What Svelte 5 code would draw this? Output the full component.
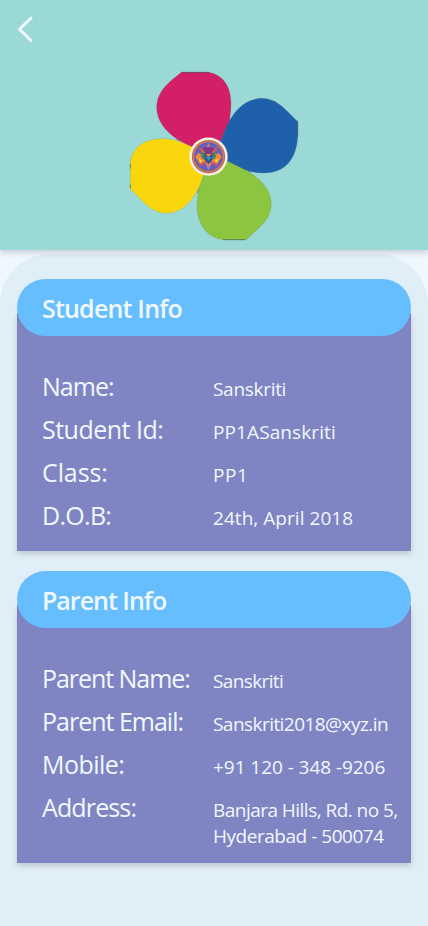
<script>
  // Each text carries its own tracking in px: [label, tracking, value lines]
  const cards = [
    {
      title: 'Student Info',
      tracking: -0.8,
      kind: 'student',
      rows: [
        ['Name:', -0.95, [['Sanskriti', -0.3]]],
        ['Student Id:', -0.5, [['PP1ASanskriti', 0.1]]],
        ['Class:', -0.1, [['PP1', 0.6]]],
        ['D.O.B:', -0.7, [['24th, April 2018', 0.05]]]
      ]
    },
    {
      title: 'Parent Info',
      tracking: -1,
      kind: 'parent',
      rows: [
        ['Parent Name:', -1.05, [['Sanskriti', -0.63]]],
        ['Parent Email:', -1, [['Sanskriti2018@xyz.in', -0.55]]],
        ['Mobile:', -0.55, [['+91 120 - 348 -9206', -0.05]]],
        ['Address:', -0.87, [['Banjara Hills, Rd. no 5,', -0.53], ['Hyderabad - 500074', -0.47]]]
      ]
    }
  ];
  const spokes = [0, 45, 90, 135, 180, 225, 270, 315];
</script>

<div class="screen">
  <header>
    <button class="back" aria-label="Back">
      <svg width="20" height="30" viewBox="0 0 20 30" fill="none" stroke="#f0f8ff" stroke-width="3" stroke-linecap="round" stroke-linejoin="round">
        <path d="M14 4 2.500 15.200 14 26.500" />
      </svg>
    </button>
    <svg class="flower" width="190" height="190" viewBox="0 0 570 570">
      <g stroke="#65717c" stroke-opacity=".35" stroke-width="1.5">
        <path fill="#d31f67" d="M184 37H267C313 46 333 84 333 130C334 181 318 215 303 243L264 290L211 258C163 238 111 199 110 144C110 91 150 65 184 37Z" />
        <path fill="#1f60aa" d="M303 243C319 193 352 116 426 115C476 116 501 156 533 184V232C529 302 490 343 425 339C381 337 351 323 323 304L264 290Z" />
        <path fill="#8cc540" d="M323 304C372 328 454 359 454 434C452 483 411 507 379 539H309C255 532 229 485 231 431C232 399 239 372 250 346L264 290Z" />
        <path fill="#fad70c" d="M250 346C236 394 202 460 139 460C91 459 62 416 31 386V310C36 259 75 235 133 236C162 236 187 247 211 258L264 290Z" />
      </g>
      <g stroke="#20292d" stroke-opacity=".65" stroke-width="2" fill="none">
        <path d="M184 37H267M533 184V230M309 539H376M31 312V326M31 374V384M330 174L328 187M169 238L179 242M385 334L392 336M236 388L233 399" />
      </g>
      <circle cx="265.500" cy="290" r="57.500" fill="#f5f0df" />
      <circle cx="265.500" cy="290" r="50" fill="#b46a68" />
      <circle cx="265.500" cy="290" r="45" fill="#6360bd" stroke="#e17a42" stroke-width="4" />
      <g transform="translate(265.500 290)">
        {#each spokes as angle}
          <path transform={`rotate(${angle})`} d="M-10 -18L0 -41 10 -18Z" fill={angle % 90 ? '#cf5961' : '#d78a62'} />
        {/each}
        <path d="M-39 1L-30 -12-21 -5-15 -20 0 -8 15 -20 21 -5 30 -12 39 1 27 21 7 13 0 29-7 13-27 21Z" fill="#f28b32" />
        <path d="M-17 -24Q0 -36 17 -24L10 -8H-10Z" fill="#853883" />
        <path d="M-20 -17L-4 -4-8 14-22 2ZM20 -17L4 -4 8 14 22 2Z" fill="#3c8470" />
        <path d="M-13 -10L0 0 13 -10 9 12 0 23-9 12Z" fill="#3f4c91" />
        <path d="M-8 0H8L0 12Z" fill="#27a2b3" />
        <path d="M-30 4L-18 12-25 18ZM30 4L18 12 25 18Z" fill="#ffd13f" />
        <circle cy="30" r="5" fill="#b975aa" />
      </g>
    </svg>
  </header>

  <main>
    {#each cards as card}
      <section class={card.kind}>
        <h2><span style:letter-spacing="{card.tracking}px">{card.title}</span></h2>
        <dl>
          {#each card.rows as [label, tracking, lines]}
            <div class="row">
              <dt style:letter-spacing="{tracking}px">{label}</dt>
              <dd>
                {#each lines as [text, spacing]}
                  <span class="line" style:letter-spacing="{spacing}px">{text}</span>
                {/each}
              </dd>
            </div>
          {/each}
        </dl>
      </section>
    {/each}
  </main>
</div>

<style>
  :global(body) { margin: 0; background: #f0f8ff; }
  .screen {
    width: 428px;
    height: 926px;
    overflow: hidden;
    display: flex;
    flex-direction: column;
    color: #f0f8ff;
    background: #f0f8ff;
    font-family: "Open Sans", "Noto Sans", sans-serif;
  }
  header {
    box-sizing: border-box;
    height: 250px;
    flex: none;
    display: flex;
    align-items: flex-start;
    background: #9ad9d6;
    box-shadow: 0 3px 6px rgba(0, 0, 0, .16);
    position: relative;
    z-index: 1;
  }
  .back {
    display: block;
    margin: 14px 83px 0 17px;
    padding: 0;
    border: 0;
    background: none;
    width: 20px;
    height: 30px;
  }
  .back svg { display: block; }
  .flower { margin-top: 60px; display: block; }
  main {
    box-sizing: border-box;
    flex: 1;
    margin-top: 4px;
    padding: 25px 17px 0;
    display: flex;
    flex-direction: column;
    gap: 20px;
    background: #e0eef7;
    border-radius: 50px 50px 0 0;
  }
  section { display: flex; flex-direction: column; flex: none; }
  .student { height: 272px; }
  .parent { height: 292px; }
  h2 {
    box-sizing: border-box;
    height: 57px;
    flex: none;
    margin: 0;
    padding: 1px 25px 0;
    display: flex;
    align-items: center;
    position: relative;
    z-index: 1;
    background: #66beff;
    border-radius: 28.5px;
    font-size: 25px;
    font-weight: 600;
  }
  dl {
    box-sizing: border-box;
    flex: 1;
    margin: -23px 0 0;
    padding: 52px 0 0 25px;
    background: #7f85c2;
    box-shadow: 0 3px 6px rgba(0, 0, 0, .16);
  }
  .row { display: flex; min-height: 43px; align-items: baseline; }
  dt { width: 171px; flex: none; font-size: 25px; line-height: 43px; white-space: nowrap; }
  dd { margin: 0; font-size: 19px; line-height: 26px; }
  .line { display: block; white-space: nowrap; }
</style>
